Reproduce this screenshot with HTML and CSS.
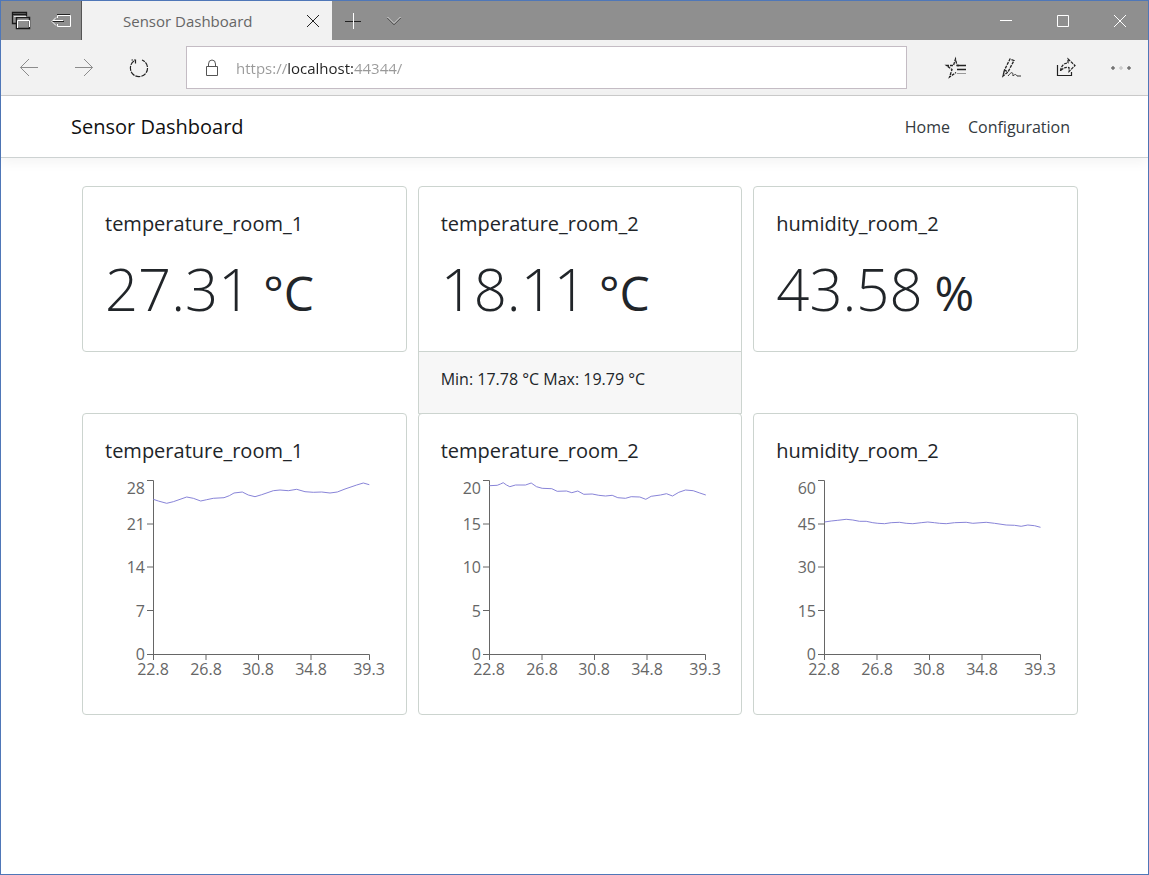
FILE: index.html
```html
<!DOCTYPE html>
<html lang="en">
<head>
<meta charset="utf-8">
<title>Sensor Dashboard</title>
<link rel="stylesheet" href="styles.css">
</head>
<body>
<div class="window">
  <div class="titlebar">
    <button class="icon-btn" aria-label="Tabs you've set aside"><svg width="20" height="20" viewBox="0 0 20 20"><path d="M5 12.500H1.500V1.500H15.500V5M1.500 3.500H15" stroke="#1a1a1a" stroke-width="1.300"/><path d="M5.500 6.500H18.500V17.500H5.500Z" stroke="#1a1a1a" stroke-width="1.500"/><path d="M6.500 17V9.500H18.500V16" stroke="#fff"/><path d="M3 5.500H15" stroke="#ddd"/></svg></button>
    <button class="icon-btn" aria-label="Set these tabs aside"><svg width="20" height="20" viewBox="0 0 20 20"><path d="M6.500 7V4.500H19.500V15.500H6.500V13" stroke="#fff"/><path d="M6 3.500H19M1 10.500H13" stroke="#222"/><path d="M5 6.500L1 10.500L5 14.500M2 9.500H12" stroke="#fff"/></svg></button>
    <div class="tab">
      <span class="tab-title">Sensor Dashboard</span>
      <button class="tab-close" aria-label="Close tab"><svg width="14" height="14" viewBox="0 0 14 14"><path d="M1 1L13 13M13 1L1 13" stroke="#222"/></svg></button>
    </div>
    <button class="icon-btn" aria-label="New tab"><svg width="18" height="18" viewBox="0 0 18 18"><path d="M1 9.500H17" stroke="#222"/><path d="M9.500 1V17" stroke="#fff"/></svg></button>
    <button class="icon-btn" aria-label="Show tab previews"><svg width="16" height="16" viewBox="0 0 16 16"><path d="M1.500 5L8 11.500L14.500 5" stroke="#222"/><path d="M1.500 4L8 10.500L14.500 4" stroke="#ddd"/></svg></button>
    <div class="window-controls">
      <button class="window-btn" aria-label="Minimize"><svg width="14" height="14" viewBox="0 0 14 14"><path d="M1 6.500H13" stroke="#fff"/></svg></button>
      <button class="window-btn" aria-label="Maximize"><svg width="14" height="14" viewBox="0 0 14 14"><path d="M1.500 1.500H12.500V12.500H1.500Z" stroke="#fff"/></svg></button>
      <button class="window-btn" aria-label="Close"><svg width="14" height="14" viewBox="0 0 14 14"><path d="M1 1L13 13M13 1L1 13" stroke="#fff"/></svg></button>
    </div>
  </div>

  <div class="toolbar">
    <button class="tool-btn" aria-label="Back"><svg width="20" height="20" viewBox="0 0 20 20"><path d="M1.500 9.500H19M10 1L1.500 9.500L10 18" stroke="#8c8c8c"/></svg></button>
    <button class="tool-btn" aria-label="Forward"><svg width="20" height="20" viewBox="0 0 20 20"><path d="M1 9.500H18.500M10 1L18.500 9.500L10 18" stroke="#8c8c8c"/></svg></button>
    <button class="tool-btn" aria-label="Refresh"><svg width="20" height="20" viewBox="0 0 20 20"><path d="M5 3A8.600 8.600 0 1 0 13 2M6.500 5.500V2H2.500" stroke="#222" stroke-width="1.200" stroke-dasharray="5 1"/></svg></button>
    <div class="address">
      <svg width="14" height="18" viewBox="0 0 14 18"><path d="M1.500 7.500H12.500V16.500H1.500ZM3.500 7.500V5A3.500 4 0 0 1 10.500 5V7.500" stroke="#555"/></svg>
      <input class="url" type="text" aria-label="Address" value="https://localhost:44344/">
    </div>
    <div class="tools">
      <button class="tool-btn" aria-label="Favorites"><svg width="22" height="22" viewBox="0 0 22 22"><path d="M14 8.500H12L10.500 2L8.500 8.500H1.500L7 12.500L4.500 20L11 15.500" stroke="#222" stroke-width="1.300" stroke-dasharray="3 1"/><path d="M12 8.500H21M12 12.500H21" stroke="#222" stroke-width="1.500"/><path d="M12 16.500H21" stroke="#999"/></svg></button>
      <button class="tool-btn" aria-label="Add notes"><svg width="22" height="22" viewBox="0 0 22 22"><path d="M3 19L4.500 13L10 2L14 3.500L8 15L3 19L4.500 13L8 15" stroke="#222" stroke-width="1.300" stroke-dasharray="3 1"/><path d="M8 19C12 14 13 15 13 19C15 17 16 17 17 19H21" stroke="#333"/></svg></button>
      <button class="tool-btn" aria-label="Share"><svg width="22" height="22" viewBox="0 0 22 22"><path d="M2.500 8V18.500H16.500V15" stroke="#222" stroke-width="1.200"/><path d="M5.500 14C6 9 9 6 13 6V2L20 8.500L14 14.500V10.500C10 10 8 11 5.500 14Z" stroke="#222" stroke-width="1.200" stroke-dasharray="3 1"/></svg></button>
      <button class="tool-btn" aria-label="Settings and more"><svg width="22" height="22" viewBox="0 0 22 22"><circle cx="3" cy="11" r="1.200" stroke="#333"/><circle cx="11" cy="11" r="1.200" stroke="#bbb"/><circle cx="19" cy="11" r="1.200" stroke="#333"/></svg></button>
    </div>
  </div>

  <header class="navbar">
    <a class="brand" href="#">Sensor Dashboard</a>
    <nav class="links"><a href="#">Home</a><a href="#">Configuration</a></nav>
  </header>

  <main class="board">
    <section class="row">
      <article class="card">
        <div class="card-body"><h2>temperature_room_1</h2><p class="value"><span>27.31</span> <small>°C</small></p></div>
      </article>
      <article class="card with-footer">
        <div class="card-body"><h2>temperature_room_2</h2><p class="value"><span>18.11</span> <small>°C</small></p></div>
        <footer class="card-footer">Min: 17.78 °C Max: 19.79 °C</footer>
      </article>
      <article class="card">
        <div class="card-body"><h2>humidity_room_2</h2><p class="value"><span>43.58</span> <small>%</small></p></div>
      </article>
    </section>

    <section class="row charts">
      <article class="card">
        <div class="card-body"><h2>temperature_room_1</h2>
          <svg class="chart" width="280" height="210" viewBox="0 0 280 210" role="img" aria-label="temperature_room_1 history">
            <path class="axis" d="M42 5.500H48.500V179.500H264.500V185M42 49H48M42 92H48M42 135.500H48M42 179.500H48M48.500 179V185M101 179V185M153.500 179V185M206 179V185"/>
            <g class="y-labels"><text x="40" y="19">28</text><text x="40" y="55">21</text><text x="40" y="98">14</text><text x="40" y="142">7</text><text x="40" y="185">0</text></g>
            <g class="x-labels"><text x="48" y="200">22.8</text><text x="101" y="200">26.8</text><text x="153" y="200">30.8</text><text x="206" y="200">34.8</text><text x="264" y="200">39.3</text></g>
            <polyline class="series" points="48.300,24.300 53.300,26 61.700,28.300 68.300,26.700 81.700,22 88.300,23.300 95.700,26 101.700,24.700 108.300,23.300 119,22.700 124.300,20.700 129,18 137.300,17 143.300,20 150,21.700 156.700,19.700 168.300,15.700 175,15 183.300,15.700 191.700,14.300 200,16.700 208.300,17.300 216.700,17 225,18 232.300,17 240,14 251.700,10 258.300,8 264.300,9.700"/>
          </svg>
        </div>
      </article>
      <article class="card">
        <div class="card-body"><h2>temperature_room_2</h2>
          <svg class="chart" width="280" height="210" viewBox="0 0 280 210" role="img" aria-label="temperature_room_2 history">
            <path class="axis" d="M42 5.500H48.500V179.500H264.500V185M42 49H48M42 92H48M42 135.500H48M42 179.500H48M48.500 179V185M101 179V185M153.500 179V185M206 179V185"/>
            <g class="y-labels"><text x="40" y="19">20</text><text x="40" y="55">15</text><text x="40" y="98">10</text><text x="40" y="142">5</text><text x="40" y="185">0</text></g>
            <g class="x-labels"><text x="48" y="200">22.8</text><text x="101" y="200">26.8</text><text x="153" y="200">30.8</text><text x="206" y="200">34.8</text><text x="264" y="200">39.3</text></g>
            <polyline class="series" points="48.500,10.700 56.200,10.300 59.500,9 62.200,7.700 65.500,10 68.800,11.700 74.500,10 84.500,10 90.200,8 95.500,11.700 101.200,13.300 110.800,13.700 116.200,16.300 125.500,16 130.800,17.700 136.800,16 142.800,19.300 151.200,19 157.800,20.300 164.500,21 171.200,20.300 176.800,22.700 184.500,23.300 190.200,21.700 198.800,22 204.800,24.300 210.200,21.300 219.500,20 225.500,18.700 231.500,21 237.800,17.300 244.500,15 252.200,15.700 258.800,18 264.800,20"/>
          </svg>
        </div>
      </article>
      <article class="card">
        <div class="card-body"><h2>humidity_room_2</h2>
          <svg class="chart" width="280" height="210" viewBox="0 0 280 210" role="img" aria-label="humidity_room_2 history">
            <path class="axis" d="M42 5.500H48.500V179.500H264.500V185M42 49H48M42 92H48M42 135.500H48M42 179.500H48M48.500 179V185M101 179V185M153.500 179V185M206 179V185"/>
            <g class="y-labels"><text x="40" y="19">60</text><text x="40" y="55">45</text><text x="40" y="98">30</text><text x="40" y="142">15</text><text x="40" y="185">0</text></g>
            <g class="x-labels"><text x="48" y="200">22.8</text><text x="101" y="200">26.8</text><text x="153" y="200">30.8</text><text x="206" y="200">34.8</text><text x="264" y="200">39.3</text></g>
            <polyline class="series" points="48.500,47 55.200,46 61.800,45.300 70.200,44.300 76.800,45 83.500,46.300 90.200,46.300 96.800,47.700 101.800,48.300 108.500,48.700 115.200,47.700 123.500,47.300 130.200,48.300 136.800,48.700 145.200,47.700 151.800,47 158.500,47.700 163.500,48.300 170.200,48.700 178.500,47.700 190.200,47.300 196.800,48.300 210.200,47.300 218.500,48.300 230.200,50 238.500,50.300 245.200,51.300 251.800,50 258.500,50.700 264.500,52.300"/>
          </svg>
        </div>
      </article>
    </section>
  </main>
</div>
</body>
</html>
```
FILE: styles.css
```css
* { box-sizing: border-box; }

body {
  margin: 0;
  background: #fff;
  color: #212529;
  font-family: "Open Sans", "Noto Sans", sans-serif;
  font-size: 16px;
  line-height: 24px;
}

button {
  display: flex;
  align-items: center;
  justify-content: center;
  padding: 0;
  border: 0;
  background: none;
}

svg { display: block; fill: none; overflow: visible; }
a { color: inherit; text-decoration: none; }
h2, p { margin: 0; font-weight: 400; }

.window { min-height: 100vh; border: 1px solid #4f77b8; }

/* Browser chrome */
.titlebar { display: flex; height: 39px; background: #8f8f8f; }
.icon-btn { width: 40px; }
.tab + .icon-btn { width: 42px; }
.tab {
  display: flex;
  align-items: center;
  justify-content: space-between;
  width: 251px;
  padding: 0 12px 0 41px;
  border-left: 1px solid #555;
  background: #f2f2f2;
}
.tab-title { color: #666; font-size: 15px; }
.tab-close { width: 14px; height: 14px; }
.window-controls { display: flex; margin-left: auto; }
.window-btn { width: 57px; }

.toolbar {
  display: flex;
  align-items: center;
  height: 56px;
  border-bottom: 1px solid #ccc;
  background: #f2f2f2;
}
.tool-btn { flex: none; width: 55px; height: 40px; }
.address {
  display: flex;
  flex: 1;
  align-items: center;
  gap: 17px;
  height: 43px;
  margin-left: 20px;
  padding-left: 18px;
  border: 1px solid #c4bcc4;
  background: #fff;
}
.url {
  flex: 1;
  min-width: 0;
  padding: 0;
  border: 0;
  outline: 0;
  background: linear-gradient(90deg, #999 52px, #222 52px 118px, #999 118px);
  background-clip: text;
  -webkit-background-clip: text;
  color: transparent;
  font: inherit;
  font-size: 15px;
}
.tools { display: flex; margin-left: 21px; }

/* Page */
.navbar {
  display: flex;
  align-items: center;
  justify-content: space-between;
  height: 62px;
  padding: 1px 78px 0 70px;
  border-bottom: 1px solid #cdd2d2;
  box-shadow: 0 4px 12px rgba(0, 0, 0, 0.05);
}
.brand { color: #111; font-size: 20px; }
.links { display: flex; gap: 18px; color: #343a40; }

.board { padding: 28px 70px 0 81px; }
.row {
  display: grid;
  grid-template-columns: repeat(3, minmax(0, 1fr));
  align-items: start;
  gap: 11px;
}
.charts { margin-top: -1px; }
.card { border: 1px solid #ccd4cf; border-radius: 4px; background: #fff; }
.with-footer { border-radius: 4px 4px 0 0; }
.card-body { padding: 23px 22px 22px; }
.card h2 { font-size: 20px; line-height: 28px; }
.value {
  display: flex;
  align-items: baseline;
  gap: 12px;
  padding-top: 15px;
  font-size: 58px;
  font-weight: 300;
  line-height: 72px;
}
.value small { font-size: 48px; font-weight: 400; }
.row:first-child .card-body { height: 164px; }
.card-footer {
  padding: 15px 22px 22px;
  border-top: 1px solid #ccd4cf;
  background: #f7f7f7;
}
.charts .card-body { padding-bottom: 29px; }
.chart { margin-top: 10px; }
.axis { stroke: #666; }
.series { stroke: #8884d8; stroke-linejoin: round; }
.chart text { fill: #666; font-size: 16px; }
.y-labels { text-anchor: end; }
.x-labels { text-anchor: middle; }
```
